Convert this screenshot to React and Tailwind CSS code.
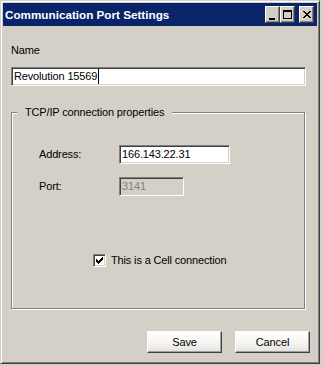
import React from "react";

const font = "font-['Liberation_Sans',Arial,sans-serif]";

function Sunken({ width, disabled, children, caret }) {
  return (
    <div
      className={`h-[19px] flex items-center pl-[2px] border border-t-[#808080] border-l-[#808080] border-b-white border-r-white shadow-[inset_1px_1px_0_#404040,inset_-1px_-1px_0_#d4d0c8] text-[11px] leading-[13px] ${
        disabled ? "bg-[#d4d0c8] text-[#808080]" : "bg-white text-black"
      }`}
      style={{ width }}
    >
      <span>{children}</span>
      {caret && <span className="ml-[1px] w-[1px] h-[15px] bg-black" />}
    </div>
  );
}

function TitleButton({ children, className = "" }) {
  return (
    <div
      className={`w-[15px] h-[17px] bg-[#d4d0c8] border border-t-white border-l-white border-b-[#404040] border-r-[#404040] shadow-[inset_-1px_-1px_0_#808080] flex items-center justify-center ${className}`}
    >
      {children}
    </div>
  );
}

function Button({ children }) {
  return (
    <div className="w-[75px] h-[22px] flex items-center justify-center border border-t-white border-l-white border-b-[#404040] border-r-[#404040] shadow-[inset_-1px_-1px_0_#a0a0a0] bg-[linear-gradient(#ffffff,#f4f3f1_60%,#e4e1dc)] text-[11px] leading-[13px] text-black">
      {children}
    </div>
  );
}

export default function App() {
  return (
    <div className={`w-[323px] h-[366px] bg-[#d4d0c8] ${font}`}>
      <div className="w-[320px] h-[364px] bg-[#d4d0c8] border border-t-[#d4d0c8] border-l-[#d4d0c8] border-b-[#404040] border-r-[#404040] shadow-[inset_1px_1px_0_#fff,inset_-1px_-1px_0_#808080] p-[2px] flex flex-col">
        {/* Title bar */}
        <div className="h-[23px] bg-[#0a246a] flex items-center pl-[2px] pr-[3px]">
          <span className="flex-1 text-white font-bold text-[11.7px] leading-[14px]">
            Communication Port Settings
          </span>
          <TitleButton>
            <svg width="9" height="9" viewBox="0 0 9 9" shapeRendering="crispEdges" className="mt-[1px]">
              <rect x="1" y="7" width="6" height="2" fill="#000" />
            </svg>
          </TitleButton>
          <TitleButton>
            <svg width="9" height="9" viewBox="0 0 9 9" shapeRendering="crispEdges">
              <rect x="0" y="0" width="9" height="2" fill="#000" />
              <rect x="0" y="0" width="1" height="9" fill="#000" />
              <rect x="8" y="0" width="1" height="9" fill="#000" />
              <rect x="0" y="8" width="9" height="1" fill="#000" />
            </svg>
          </TitleButton>
          <TitleButton className="ml-[4px]">
            <svg width="8" height="7" viewBox="0 0 8 7" shapeRendering="crispEdges">
              <rect x="0" y="0" width="2" height="1" fill="#000" />
              <rect x="6" y="0" width="2" height="1" fill="#000" />
              <rect x="1" y="1" width="2" height="1" fill="#000" />
              <rect x="5" y="1" width="2" height="1" fill="#000" />
              <rect x="2" y="2" width="4" height="1" fill="#000" />
              <rect x="3" y="3" width="2" height="1" fill="#000" />
              <rect x="2" y="4" width="4" height="1" fill="#000" />
              <rect x="1" y="5" width="2" height="1" fill="#000" />
              <rect x="5" y="5" width="2" height="1" fill="#000" />
              <rect x="0" y="6" width="2" height="1" fill="#000" />
              <rect x="6" y="6" width="2" height="1" fill="#000" />
            </svg>
          </TitleButton>
        </div>

        {/* Body */}
        <div className="flex flex-col pl-[8px] text-[11px] leading-[13px] tracking-[-0.15px] text-black">
          <div className="mt-[18px]">Name</div>
          <div className="mt-[10px]">
            <Sunken width={295} caret>
              Revolution 15569
            </Sunken>
          </div>

          <fieldset className="mt-[20px] w-[294px] h-[203px] border border-[#808080] pl-[5px] shadow-[inset_1px_1px_0_#fff,1px_1px_0_#fff]">
            <legend className="px-[8px] leading-[13px] bg-[#d4d0c8]">
              TCP/IP connection properties
            </legend>
            <div className="mt-[26px] flex items-center h-[19px]">
              <span className="ml-[22px] w-[80px]">Address:</span>
              <Sunken width={111}>166.143.22.31</Sunken>
            </div>
            <div className="mt-[13px] flex items-center h-[19px]">
              <span className="ml-[22px] w-[80px]">Port:</span>
              <Sunken width={65} disabled>
                3141
              </Sunken>
            </div>
            <div className="mt-[58px] ml-[76px] flex items-center h-[13px] gap-[5px]">
              <div className="w-[13px] h-[13px] bg-white border border-t-[#808080] border-l-[#808080] border-b-white border-r-white shadow-[inset_1px_1px_0_#404040,inset_-1px_-1px_0_#d4d0c8] flex items-center justify-center">
                <svg width="7" height="7" viewBox="0 0 7 7" shapeRendering="crispEdges">
                  <rect x="6" y="0" width="1" height="1" fill="#000" />
                  <rect x="5" y="1" width="2" height="1" fill="#000" />
                  <rect x="0" y="2" width="1" height="1" fill="#000" />
                  <rect x="4" y="2" width="3" height="1" fill="#000" />
                  <rect x="0" y="3" width="2" height="1" fill="#000" />
                  <rect x="3" y="3" width="3" height="1" fill="#000" />
                  <rect x="0" y="4" width="5" height="1" fill="#000" />
                  <rect x="1" y="5" width="3" height="1" fill="#000" />
                  <rect x="2" y="6" width="1" height="1" fill="#000" />
                </svg>
              </div>
              <span>This is a Cell connection</span>
            </div>
          </fieldset>

          <div className="mt-[22px] flex justify-end gap-[13px] pr-[7px]">
            <Button>Save</Button>
            <Button>Cancel</Button>
          </div>
        </div>
      </div>
    </div>
  );
}
